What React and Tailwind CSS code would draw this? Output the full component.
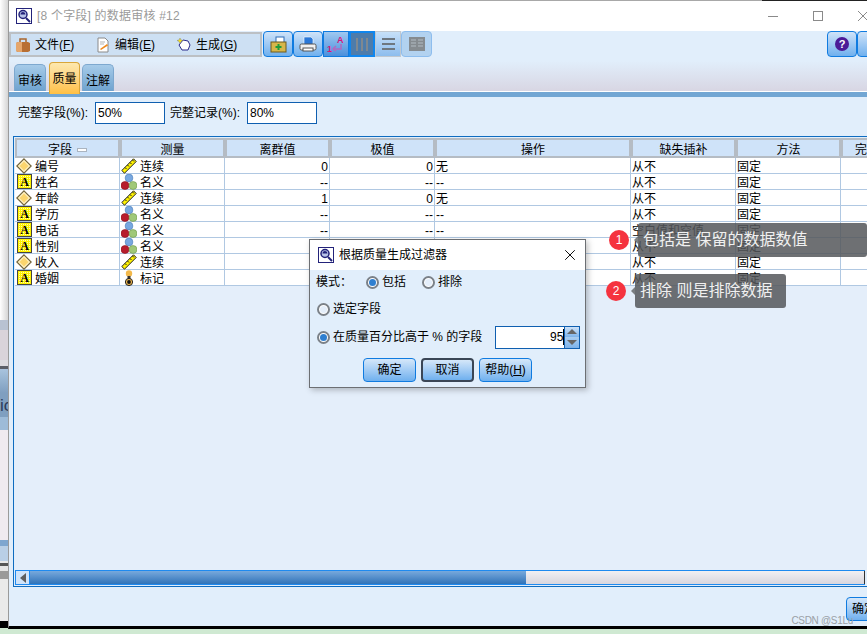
import { X } from 'lucide-react';

const font = { fontFamily: '"Liberation Sans", "Noto Sans CJK SC", sans-serif' };

const columns = [
  { label: '字段', w: 'w-[105px]' },
  { label: '测量', w: 'w-[105px]' },
  { label: '离群值', w: 'w-[105px]' },
  { label: '极值', w: 'w-[105px]' },
  { label: '操作', w: 'w-[196px]' },
  { label: '缺失插补', w: 'w-[105px]' },
  { label: '方法', w: 'w-[105px]' },
  { label: '完', w: 'w-[40px]' },
];

const rows = [
  ['diamond', '编号', 'ruler', '连续', '0', '0', '无', '从不'],
  ['text', '姓名', 'balls', '名义', '--', '--', '--', '从不'],
  ['diamond', '年龄', 'ruler', '连续', '1', '0', '无', '从不'],
  ['text', '学历', 'balls', '名义', '--', '--', '--', '从不'],
  ['text', '电话', 'balls', '名义', '--', '--', '--', '空白值和空值'],
  ['text', '性别', 'balls', '名义', '--', '--', '--', '从不'],
  ['diamond', '收入', 'ruler', '连续', '--', '--', '--', '从不'],
  ['text', '婚姻', 'flag', '标记', '--', '--', '--', '从不'],
];

const LensIcon = ({ size = 16 }) => (
  <svg width={size} height={size} viewBox="0 0 16 16">
    <rect x="0.5" y="0.5" width="15" height="15" fill="#fff" stroke="#23237a" />
    <circle cx="7" cy="6.5" r="4" fill="#b9c4e8" stroke="#23237a" strokeWidth="1.5" />
    <path d="M4.500 6.500a2.500 2.500 0 0 1 5 0z" fill="#23237a" />
    <path d="M10 10l4 4" stroke="#23237a" strokeWidth="2" />
  </svg>
);

const TypeIcon = ({ type }) =>
  type === 'diamond' ? (
    <svg width="16" height="16" viewBox="0 0 16 16">
      <path d="M8 .8L15.200 8 8 15.200 .8 8z" fill="#fff1c0" stroke="#6f6138" strokeWidth="1.100" />
      <path d="M8 3.500L12.500 8 8 12.500 3.500 8z" fill="#fbd56e" />
    </svg>
  ) : (
    <svg width="15" height="15" viewBox="0 0 15 15">
      <defs>
        <pattern id="dots" width="2" height="2" patternUnits="userSpaceOnUse">
          <rect width="2" height="2" fill="#fff200" />
          <rect width="1" height="1" fill="#fffbb0" />
        </pattern>
      </defs>
      <rect x="0.5" y="0.5" width="14" height="14" fill="url(#dots)" stroke="#444" />
      <text x="7.500" y="12" textAnchor="middle" fontSize="12" fontWeight="700" fontFamily="Liberation Serif, serif" fill="#000">A</text>
    </svg>
  );

const MeasureIcon = ({ type }) => {
  if (type === 'ruler')
    return (
      <svg width="16" height="16" viewBox="0 0 16 16">
        <path d="M.8 12.500L12.500 .8 15.200 3.500 3.500 15.200z" fill="#fff200" stroke="#222" />
        <path d="M4 9.500l1.500 1.500M6.500 7L8 8.500M9 4.500L10.500 6M11.500 2L13 3.500" stroke="#222" />
      </svg>
    );
  if (type === 'flag')
    return (
      <svg width="16" height="16" viewBox="0 0 16 16">
        <circle cx="8" cy="3.500" r="3.200" fill="#f2b84b" />
        <rect x="6.500" y="6" width="3" height="3" fill="#333" />
        <circle cx="8" cy="12" r="3.600" fill="#f2b84b" stroke="#222" />
        <circle cx="8" cy="12" r="1.900" fill="#111" />
      </svg>
    );
  return (
    <svg width="16" height="16" viewBox="0 0 16 16">
      <circle cx="8" cy="4" r="3.900" fill="#78a8e0" stroke="#4d7fb8" strokeWidth="0.6" />
      <circle cx="4" cy="11.500" r="4" fill="#b81c2c" stroke="#8c1520" strokeWidth="0.6" />
      <circle cx="12" cy="11.500" r="4" fill="#a0c878" stroke="#6f9a4c" strokeWidth="0.6" />
    </svg>
  );
};

const ToolButton = ({ children }) => (
  <div className="flex h-[26px] w-[30px] items-center justify-center rounded-[4px] border border-[#0f7be0] bg-gradient-to-b from-[#cfe3f8] to-[#6fb0ee]">
    {children}
  </div>
);

const Radio = ({ checked }) => (
  <span className="flex h-[13px] w-[13px] items-center justify-center rounded-full border-2 border-[#7b8188] bg-white">
    <span className={`h-[7px] w-[7px] rounded-full ${checked ? 'bg-[#2f7fd0]' : 'bg-[#e4eefa]'}`} />
  </span>
);

const DialogButton = ({ children, active }) => (
  <div className={`flex h-[24px] w-[53px] items-center justify-center rounded-[4px] bg-gradient-to-b from-[#d5e7f9] to-[#6fb0ee] text-[12px] text-black ${active ? 'border-2 border-[#3a4656]' : 'border border-[#0f7be0]'}`}>
    {children}
  </div>
);

const Tag = ({ n, text, className, boxClass }) => (
  <div className={`absolute flex h-[34px] items-center ${className}`}>
    <span className="flex h-[20px] w-[20px] shrink-0 items-center justify-center rounded-full bg-[#f5333f] text-[12px] text-white">{n}</span>
    <span className="ml-[5px] h-0 w-0 shrink-0 border-y-[4px] border-r-[4px] border-y-transparent border-r-[#5f6163]/80" />
    <span className={`flex h-full shrink-0 items-center rounded-[3px] bg-[#55575a]/85 pl-[5px] text-[16px] whitespace-nowrap text-[#f0f0f0] ${boxClass}`}>{text}</span>
  </div>
);

export default function App() {
  return (
    <div className="relative flex h-[634px] w-[867px] overflow-hidden bg-[#cfe9d2] text-black" style={font}>
      {/* window behind */}
      <div className="flex h-[628px] w-[8px] shrink-0 flex-col overflow-hidden">
        <div className="h-[320px] bg-gradient-to-r from-white to-[#d5d5d5]" />
        <div className="h-[10px] bg-[#b8c2d2]" />
        <div className="h-[30px] bg-[#d9d3da]" />
        <div className="h-[6px] bg-[#dcdce0]" />
        <div className="h-[3px] bg-[#5a6068]" />
        <div className="h-[24px] bg-gradient-to-b from-[#a9c4de] to-[#7f9fc0]" />
        <div className="flex h-[24px] items-center overflow-hidden bg-[#7f9fc0] text-[17px] leading-none text-[#2a3a5a]">ic</div>
        <div className="h-[13px] bg-[#9dbbd8]" />
        <div className="h-[110px] bg-[#efeaf0]" />
        <div className="h-[6px] bg-[#7ea6cf]" />
        <div className="h-[15px] bg-[#b9cfe6]" />
        <div className="h-[2px] bg-[#e8e8e8]" />
        <div className="h-[3px] bg-[#555]" />
        <div className="h-[5px] bg-[#e5e5e5]" />
        <div className="h-[8px] bg-[#9a9a9a]" />
        <div className="h-[42px] bg-[#eaeaea]" />
        <div className="flex-1 bg-black" />
      </div>

      {/* main window */}
      <div className="flex h-[629px] w-[859px] shrink-0 flex-col border-l border-l-[#9a9a9a] border-b-[3px] border-b-black bg-[#e1eefb]">
        <div className="flex h-[1px] shrink-0 bg-[#a8a8a8]">
          <div className="ml-auto w-[105px] bg-[#222]" />
        </div>
        <div className="flex h-[30px] shrink-0 items-center bg-white pl-[7px]">
          <LensIcon />
          <span className="ml-[5px] text-[12px] tracking-[0.2px] text-[#9a9a9a]">[8 个字段] 的数据审核 #12</span>
          <div className="ml-auto mr-[-1px] flex items-center gap-[35px]">
            <span className="h-[1px] w-[10px] bg-[#8a8a8a]" />
            <span className="h-[10px] w-[10px] border border-[#8a8a8a]" />
            <svg width="10" height="10" viewBox="0 0 10 10">
              <path d="M0 0l10 10M10 0L0 10" stroke="#8a8a8a" />
            </svg>
          </div>
        </div>

        <div className="flex h-[30px] shrink-0 items-start justify-between">
          <div className="flex items-center">
            <div className="mt-[1px] flex h-[25px] w-[253px] items-center border-2 border-[#bcc0c4] bg-[#cde0f3] pl-[4px] text-[12px]">
              <span className="flex w-[80px] items-center gap-[4px]">
                <svg width="16" height="16" viewBox="0 0 16 16">
                  <path d="M5 5V2h6v3" fill="none" stroke="#a9662e" strokeWidth="1.500" />
                  <path d="M1 6l2-1h10l2 1v8l-2 1H3l-2-1z" fill="#b86f33" />
                  <path d="M1 6l2-1h4v10H3l-2-1z" fill="#e5a66c" />
                </svg>
                <span>文件(<span className="underline">F</span>)</span>
              </span>
              <span className="flex w-[82px] items-center gap-[4px]">
                <svg width="16" height="16" viewBox="0 0 16 16">
                  <path d="M3 1h7l3 3v11H3z" fill="#fff" stroke="#8a8a8a" />
                  <path d="M5 5h5M5 7h4" stroke="#b5b5b5" />
                  <path d="M5 12l7-5 1 1.500-7 4.500z" fill="#f08a1d" />
                </svg>
                <span>编辑(<span className="underline">E</span>)</span>
              </span>
              <span className="flex items-center gap-[5px]">
                <svg width="14" height="16" viewBox="0 0 14 16">
                  <path d="M6 3l5 1 2 4-2 5H5L2 8z" fill="#fff" stroke="#2a2a8c" />
                  <path d="M3 1l1 2 2 .5-2 1L3 6.500l-1-2-2-1 2-.5z" fill="#f6e21c" stroke="#777" strokeWidth="0.4" />
                </svg>
                <span>生成(<span className="underline">G</span>)</span>
              </span>
            </div>
            <div className="ml-[1px] flex items-center">
              <ToolButton>
                <svg width="17" height="17" viewBox="0 0 17 17">
                  <rect x="6" y="1" width="8" height="9" fill="#fff" stroke="#2f6db5" />
                  <rect x="1" y="6" width="15" height="10" fill="#d6b64a" stroke="#6d5a1c" />
                  <path d="M8.500 8v6M5.500 11h6" stroke="#1f9b3a" strokeWidth="2" />
                </svg>
              </ToolButton>
              <ToolButton>
                <svg width="18" height="17" viewBox="0 0 18 17">
                  <path d="M5 1h7l2 2v6H5z" fill="#2a78d8" stroke="#fff" strokeWidth="0.6" />
                  <rect x="1" y="8" width="16" height="6" rx="1.500" fill="#f1f1f1" stroke="#555" />
                  <rect x="4" y="12" width="10" height="3" fill="#fff" stroke="#555" />
                </svg>
              </ToolButton>
              <div className="flex h-[26px] w-[26px] items-center justify-center border border-[#0f7be0] bg-gradient-to-b from-[#9fc8f0] to-[#4a90dc]">
                <svg width="20" height="20" viewBox="0 0 20 20">
                  <text x="11" y="9" fontSize="9" fontWeight="700" fill="#d8157a" fontFamily="Liberation Sans">A</text>
                  <text x="1" y="18" fontSize="9" fontWeight="700" fill="#d8157a" fontFamily="Liberation Sans">1</text>
                  <path d="M15 10v5H8m2-3l-3 3 3 2" fill="none" stroke="#b06ac0" strokeWidth="1.500" />
                </svg>
              </div>
              <div className="flex h-[26px] w-[26px] items-center justify-center gap-[3px] border-2 border-[#0f86ee] bg-[#4d7cab]">
                <span className="h-[13px] w-[2px] bg-[#7f8890]" />
                <span className="h-[13px] w-[2px] bg-[#7f8890]" />
                <span className="h-[13px] w-[2px] bg-[#7f8890]" />
              </div>
              <div className="flex h-[26px] w-[26px] flex-col items-center justify-center gap-[3px] border border-[#c0c8d0] bg-gradient-to-b from-[#c7e0f8] to-[#8dbdee]">
                <span className="h-[2px] w-[13px] bg-[#6e7780]" />
                <span className="h-[2px] w-[13px] bg-[#6e7780]" />
                <span className="h-[2px] w-[13px] bg-[#6e7780]" />
              </div>
              <div className="flex h-[26px] w-[31px] items-center justify-center rounded-[4px] border border-[#8dbdee] bg-[#b2d2f0]">
                <svg width="16" height="14" viewBox="0 0 16 14">
                  <rect width="16" height="14" fill="#858b90" />
                  <path d="M2 3h5M2 6h5M2 9h5M9 3h5M9 6h5M9 9h5" stroke="#b2bcc4" />
                </svg>
              </div>
            </div>
          </div>
          <div className="mr-[-20px] flex">
            <ToolButton>
              <span className="flex h-[14px] w-[14px] items-center justify-center rounded-full bg-[#4b1a97] text-[11px] font-bold text-white">?</span>
            </ToolButton>
            <ToolButton>
              <span className="text-[12px] font-bold text-red-600">?</span>
            </ToolButton>
          </div>
        </div>

        {/* tabs */}
        <div className="z-10 flex h-[30px] shrink-0 items-start bg-gradient-to-b from-[#e1eefb] to-[#d8d6e3] pl-[5px] text-[12px]">
          <div className="mt-[3px] flex h-[27px] w-[32px] items-center justify-center rounded-t-[5px] border border-b-0 border-[#7da8cf] bg-gradient-to-b from-[#a6cbe9] to-[#6fa3cf] pt-[6px]">审核</div>
          <div className="ml-[3px] mt-[1px] flex h-[32px] w-[31px] items-center justify-center rounded-t-[4px] border border-b-0 border-[#d9a63a] bg-gradient-to-b from-[#fde8ae] to-[#ffc043]">质量</div>
          <div className="ml-[2px] mt-[3px] flex h-[27px] w-[32px] items-center justify-center rounded-t-[5px] border border-b-0 border-[#7da8cf] bg-gradient-to-b from-[#a6cbe9] to-[#6fa3cf] pt-[6px]">注解</div>
        </div>
        <div className="h-[1px] shrink-0 bg-white" />
        <div className="h-[5px] shrink-0 bg-[#72a6d3]" />

        <div className="flex h-[39px] shrink-0 items-start pl-[9px] pt-[5px] text-[12px]">
          <span className="flex h-[22px] w-[77px] items-center">完整字段(%):</span>
          <div className="flex h-[22px] w-[70px] items-center border border-[#0f5fb0] bg-white pl-[2px]">50%</div>
          <span className="ml-[5px] flex h-[22px] w-[77px] items-center">完整记录(%):</span>
          <div className="flex h-[22px] w-[70px] items-center border border-[#0f5fb0] bg-white pl-[2px]">80%</div>
        </div>

        {/* table */}
        <div className="ml-[4px] flex h-[451px] shrink-0 flex-col overflow-hidden border border-r-0 border-[#0f6cc0] pl-[1px] pt-[1px] text-[12px]">
          <div className="flex h-[20px] shrink-0">
            {columns.map((c, i) => (
              <div key={c.label} className={`flex shrink-0 items-center justify-center border-2 border-[#b5bcc4] bg-[#cfe3f9] pt-[3px] leading-none ${c.w}`}>
                {c.label}
                {i === 0 && <span className="ml-[5px] h-[4px] w-[10px] border border-[#aab4c0] bg-white" />}
              </div>
            ))}
          </div>
          <div className="flex flex-col bg-white">
            {rows.map((r) => (
              <div key={r[1]} className="flex h-[16px] border-b border-[#b0c8e2] leading-[18px]">
                <div className="flex w-[105px] shrink-0 items-start gap-[3px] border-r border-[#b0c8e2] pl-[1px]">
                  <span className="flex h-[15px] w-[16px] shrink-0 items-center justify-center"><TypeIcon type={r[0]} /></span>
                  {r[1]}
                </div>
                <div className="flex w-[105px] shrink-0 items-start gap-[3px] border-r border-[#b0c8e2] pl-[1px]">
                  <span className="flex h-[15px] shrink-0 items-center"><MeasureIcon type={r[2]} /></span>
                  {r[3]}
                </div>
                <div className="w-[105px] shrink-0 border-r border-[#b0c8e2] pr-[1px] text-right">{r[4]}</div>
                <div className="w-[105px] shrink-0 border-r border-[#b0c8e2] pr-[1px] text-right">{r[5]}</div>
                <div className="w-[196px] shrink-0 border-r border-[#b0c8e2] pl-[1px]">{r[6]}</div>
                <div className="w-[105px] shrink-0 border-r border-[#b0c8e2] pl-[1px]">{r[7]}</div>
                <div className="w-[105px] shrink-0 border-r border-[#b0c8e2] pl-[1px]">固定</div>
                <div className="flex-1" />
              </div>
            ))}
          </div>
          <div className="flex-1 bg-[#e4eefa]" />
          <div className="mb-[1px] mr-[2px] flex h-[15px] shrink-0 border-y border-[#1e8af0]">
            <div className="flex w-[15px] shrink-0 items-center justify-center border-x border-[#1e8af0] bg-[#cfe3f9]">
              <span className="h-0 w-0 border-y-[5px] border-r-[6px] border-y-transparent border-r-[#5e5e5e]" />
            </div>
            <div className="w-[496px] shrink-0 bg-gradient-to-b from-[#78a9dc] to-[#2f73b8]" />
            <div className="flex-1 border-r border-[#333] bg-gradient-to-b from-[#f1f0f3] to-[#d8d6de]" />
          </div>
        </div>

        <div className="flex flex-1 items-start justify-end overflow-hidden pt-[10px]">
          <div className="mr-[-13px] flex h-[24px] w-[34px] shrink-0 items-center overflow-hidden rounded-[4px] border border-[#0f7be0] bg-gradient-to-b from-[#d5e7f9] to-[#6fb0ee] pl-[5px] text-[12px] whitespace-nowrap">确定</div>
        </div>
      </div>

      {/* filter dialog */}
      <div className="absolute left-[309px] top-[239px] flex h-[149px] w-[277px] flex-col border border-[#6c6f73] bg-[#e1eefb] text-[12px] shadow-[2px_2px_6px_rgba(0,0,0,0.25)]">
        <div className="flex h-[30px] shrink-0 items-center bg-white pl-[8px]">
          <LensIcon size={16} />
          <span className="ml-[5px]">根据质量生成过滤器</span>
          <X size={18} strokeWidth={1.25} className="ml-auto mr-[6px]" />
        </div>
        <div className="flex h-[24px] items-center pl-[6px]">
          <span className="w-[50px]">模式：</span>
          <Radio checked />
          <span className="ml-[3px]">包括</span>
          <span className="ml-[16px]"><Radio /></span>
          <span className="ml-[3px]">排除</span>
        </div>
        <div className="flex h-[30px] items-center pl-[7px]">
          <Radio />
          <span className="ml-[3px]">选定字段</span>
        </div>
        <div className="flex h-[26px] items-center pl-[7px]">
          <Radio checked />
          <span className="ml-[3px]">在质量百分比高于 % 的字段</span>
          <div className="ml-[13px] flex h-[23px] w-[85px] overflow-hidden border border-[#0f5fb0] bg-white">
            <div className="flex flex-1 items-center justify-end">95<span className="h-[16px] w-[1px] bg-black" /></div>
            <div className="flex w-[15px] flex-col border-l border-[#0f5fb0]">
              <div className="flex flex-1 items-center justify-center bg-gradient-to-b from-[#cfe3f8] to-[#7db3ea]">
                <span className="h-0 w-0 border-x-[5px] border-b-[5px] border-x-transparent border-b-[#666]" />
              </div>
              <div className="flex flex-1 items-center justify-center bg-gradient-to-b from-[#a9cdf0] to-[#7db3ea]">
                <span className="h-0 w-0 border-x-[5px] border-t-[5px] border-x-transparent border-t-[#666]" />
              </div>
            </div>
          </div>
        </div>
        <div className="flex flex-1 items-center justify-center gap-[5px] pt-[3px]">
          <DialogButton>确定</DialogButton>
          <DialogButton active>取消</DialogButton>
          <DialogButton>帮助(<span className="underline">H</span>)</DialogButton>
        </div>
      </div>

      {/* annotations */}
      <Tag n="1" text="包括是 保留的数据数值" className="left-[609px] top-[223px]" boxClass="w-[229px]" />
      <Tag n="2" text="排除 则是排除数据" className="left-[606px] top-[274px]" boxClass="w-[151px]" />

      <span className="absolute bottom-[6px] right-[14px] text-[10px] tracking-[-0.3px] text-[#9aa0a6]">CSDN @S1Lu</span>
    </div>
  );
}
